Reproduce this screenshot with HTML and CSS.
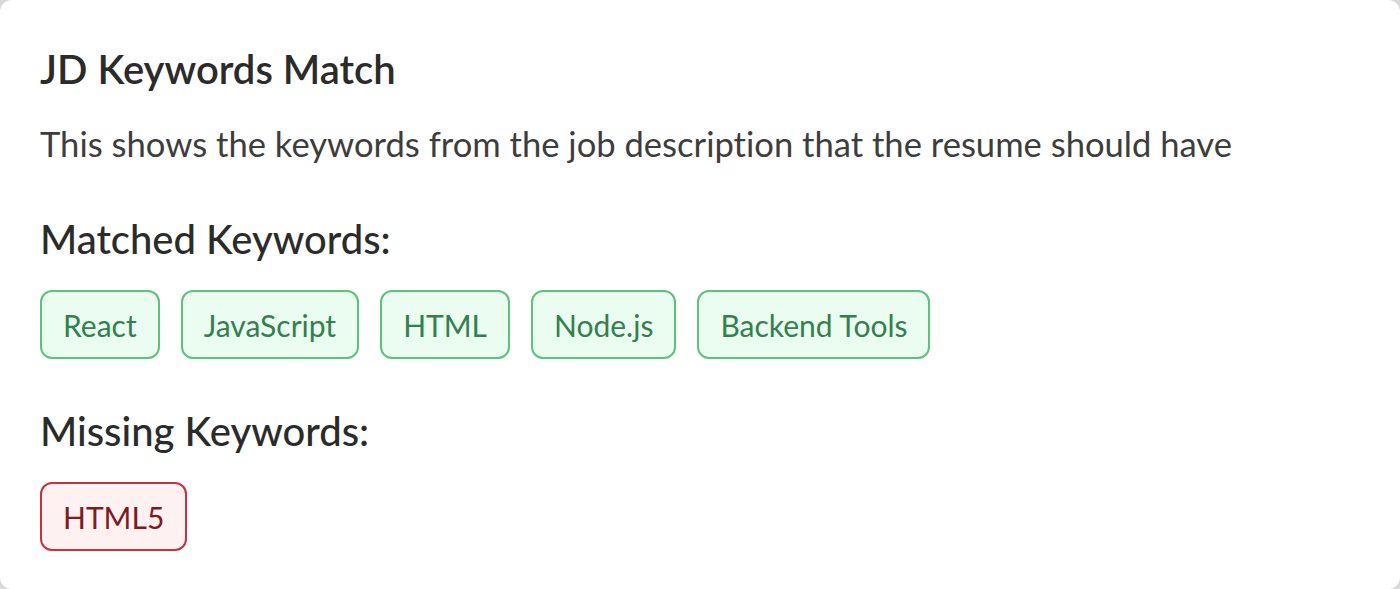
FILE: index.html
```html
<!DOCTYPE html>
<html>
<head>
<meta charset="utf-8">
<link rel="stylesheet" href="styles.css">
</head>
<body>
<div class="card">
  <h2 class="title">JD Keywords Match</h2>
  <p class="desc">This shows the keywords from the job description that the resume should have</p>
  <h3 class="section">Matched Keywords:</h3>
  <div class="tags">
    <span class="tag ok">React</span>
    <span class="tag ok">JavaScript</span>
    <span class="tag ok">HTML</span>
    <span class="tag ok">Node.js</span>
    <span class="tag ok">Backend Tools</span>
  </div>
  <h3 class="section">Missing Keywords:</h3>
  <div class="tags">
    <span class="tag miss">HTML5</span>
  </div>
</div>
</body>
</html>
```
FILE: styles.css
```css
html, body {
  margin: 0;
  padding: 0;
  background: #d9d9d9;
}
body {
  font-family: Lato, "Noto Sans", sans-serif;
  font-variant-ligatures: none;
  width: 1400px;
  height: 589px;
  overflow: hidden;
}
.card {
  box-sizing: border-box;
  width: 1400px;
  height: 589px;
  background: #ffffff;
  border-radius: 12px;
  padding: 45px 40px 0 40px;
}
.title {
  margin: 0;
  font-size: 40px;
  font-weight: 600;
  color: #2b2b2b;
  line-height: 48px;
}
.desc {
  margin: 30px 0 0 0;
  font-size: 34.6px;
  font-weight: 400;
  color: #3d3d3d;
  line-height: 42px;
}
.section {
  margin: 50px 0 0 0;
  font-size: 40px;
  font-weight: 500;
  color: #2b2b2b;
  line-height: 48px;
}
.tags {
  display: flex;
  gap: 21px;
  margin-top: 28px;
}
.tags + .section {
  margin-top: 48px;
}
.section + .tags {
  margin-top: 27px;
}
.tag {
  box-sizing: border-box;
  height: 69px;
  display: inline-flex;
  align-items: center;
  padding: 0 21px;
  border: 2px solid;
  border-radius: 12px;
  font-size: 30px;
}
.ok {
  background: #ebfcf1;
  border-color: #5cc27c;
  color: #33804f;
}
.miss {
  background: #fdf1f1;
  border-color: #c2353f;
  color: #7c1b23;
}
```
